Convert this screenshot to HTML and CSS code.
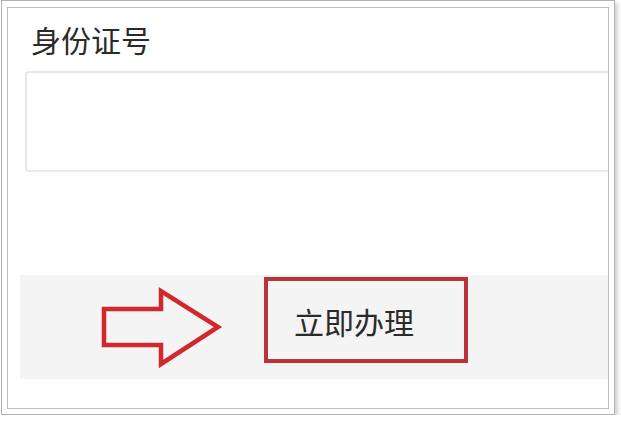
FILE: index.html
```html
<!DOCTYPE html>
<html lang="zh">
<head>
<meta charset="utf-8">
<link rel="stylesheet" href="styles.css">
</head>
<body>
<div class="frame">
  <div class="screen">
    <div class="label">身份证号</div>
    <div class="input"></div>
    <div class="band">
      <svg class="arrow" width="128" height="86" viewBox="0 0 128 86">
        <path d="M6 24 H63 V6 L120 42 L63 79 V60 H6 Z" fill="none" stroke="#d2272c" stroke-width="4.5" stroke-linejoin="miter"/>
      </svg>
      <div class="btn">立即办理</div>
    </div>
  </div>
</div>
</body>
</html>
```
FILE: styles.css
```css
html, body {
  margin: 0;
  padding: 0;
  background: #ffffff;
}
body {
  font-family: "Noto Sans CJK SC", "Noto Sans", sans-serif;
}
.frame {
  margin-left: 1px;
  width: 602px;
  height: 402px;
  padding: 6px 5px 5px 5px;
  border: 1px solid #b3b3b3;
  background: #ffffff;
  box-shadow: 3px 3px 4px rgba(0, 0, 0, 0.18);
}
.screen {
  width: 600px;
  height: 400px;
  border: 1px solid #bdbdbd;
  background: #ffffff;
  overflow: hidden;
}
.label {
  margin: 13px 0 0 23px;
  font-size: 30px;
  line-height: 36px;
  color: #2a2a2a;
}
.input {
  margin: 14px 0 0 17px;
  width: 640px;
  height: 97px;
  border: 2px solid #e8e8e8;
  border-radius: 4px;
  background: #ffffff;
}
.band {
  margin: 103px 0 0 12px;
  height: 104px;
  background: #f4f4f4;
  display: flex;
  align-items: flex-start;
}
.arrow {
  margin: 10px 0 0 78px;
  flex: none;
}
.btn {
  margin: 2px 0 0 38px;
  width: 196px;
  height: 77px;
  border: 4px solid #b8323c;
  display: flex;
  align-items: center;
  padding-left: 26px;
  padding-top: 1px;
  box-sizing: content-box;
  font-size: 30px;
  color: #2a2a2a;
  width: 170px;
}
```
